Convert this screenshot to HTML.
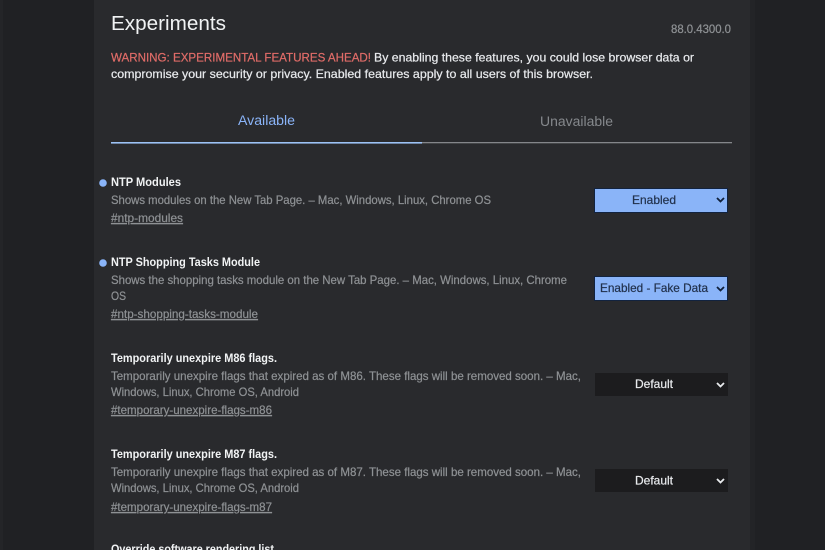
<!DOCTYPE html>
<html lang="en">
<head>
<meta charset="utf-8">
<title>Experiments</title>
<style>
html,body{margin:0;padding:0;width:825px;height:550px;overflow:hidden;background:#202124}
svg{display:block;position:absolute;left:0;top:0;filter:blur(.3px)}
text{font-family:"Liberation Sans",sans-serif;font-size:12px;stroke-width:.22px}
.t{font-weight:bold;font-size:11.5px;fill:#f1f3f4;stroke-width:0}
.d{fill:#8e9194;stroke:#8e9194}
.l{fill:#8e9194;stroke:#8e9194;text-decoration:underline}
.w{fill:#e8eaed;stroke:#e8eaed}
.r{fill:#e06c68;stroke:#e06c68}
.b{fill:#22324d;stroke:#22324d}
.f{fill:#e8eaed;stroke:#e8eaed}
</style>
</head>
<body>
<svg width="825" height="550" viewBox="0 0 825 550">
<rect width="825" height="550" fill="#202124"/>
<rect x="0" y="0" width="3" height="550" fill="#242528"/>
<rect x="750" y="0" width="5" height="550" fill="#232427"/>
<rect x="94" y="0" width="656" height="550" fill="#292a2d"/>

<text x="111" y="30" style="font-size:20px" fill="#f1f3f4" textLength="115" lengthAdjust="spacingAndGlyphs">Experiments</text>
<text x="671" y="33" style="font-size:11.5px" class="d" textLength="60" lengthAdjust="spacingAndGlyphs">88.0.4300.0</text>

<text x="111" y="61.5" class="r" textLength="260" lengthAdjust="spacingAndGlyphs">WARNING: EXPERIMENTAL FEATURES AHEAD!</text>
<text x="374" y="61.5" class="w" textLength="320" lengthAdjust="spacingAndGlyphs">By enabling these features, you could lose browser data or</text>
<text x="111" y="78" class="w" textLength="482" lengthAdjust="spacingAndGlyphs">compromise your security or privacy. Enabled features apply to all users of this browser.</text>

<text x="238" y="125" style="font-size:13.5px" fill="#8ab4f8" textLength="57" lengthAdjust="spacingAndGlyphs">Available</text>
<text x="540" y="126" style="font-size:13.5px" fill="#85888c" textLength="73" lengthAdjust="spacingAndGlyphs">Unavailable</text>
<rect x="422" y="142" width="310" height="1.3" fill="#84868a"/>
<rect x="111" y="142" width="311" height="1.6" fill="#9cc2f5"/>

<circle cx="103" cy="183" r="3.8" fill="#8ab4f8"/>
<text x="111" y="186" class="t" textLength="70" lengthAdjust="spacingAndGlyphs">NTP Modules</text>
<text x="111" y="204" class="d" textLength="380" lengthAdjust="spacingAndGlyphs">Shows modules on the New Tab Page. – Mac, Windows, Linux, Chrome OS</text>
<text x="111" y="222" class="l" textLength="72" lengthAdjust="spacingAndGlyphs">#ntp-modules</text>

<circle cx="103" cy="263" r="3.8" fill="#8ab4f8"/>
<text x="111" y="266" class="t" textLength="149" lengthAdjust="spacingAndGlyphs">NTP Shopping Tasks Module</text>
<text x="111" y="284" class="d" textLength="456" lengthAdjust="spacingAndGlyphs">Shows the shopping tasks module on the New Tab Page. – Mac, Windows, Linux, Chrome</text>
<text x="111" y="300" class="d" textLength="15" lengthAdjust="spacingAndGlyphs">OS</text>
<text x="111" y="318" class="l" textLength="147" lengthAdjust="spacingAndGlyphs">#ntp-shopping-tasks-module</text>

<text x="111" y="362" class="t" textLength="166" lengthAdjust="spacingAndGlyphs">Temporarily unexpire M86 flags.</text>
<text x="111" y="380" class="d" textLength="470" lengthAdjust="spacingAndGlyphs">Temporarily unexpire flags that expired as of M86. These flags will be removed soon. – Mac,</text>
<text x="111" y="396" class="d" textLength="188" lengthAdjust="spacingAndGlyphs">Windows, Linux, Chrome OS, Android</text>
<text x="111" y="414" class="l" textLength="161" lengthAdjust="spacingAndGlyphs">#temporary-unexpire-flags-m86</text>

<text x="111" y="458" class="t" textLength="166" lengthAdjust="spacingAndGlyphs">Temporarily unexpire M87 flags.</text>
<text x="111" y="476" class="d" textLength="470" lengthAdjust="spacingAndGlyphs">Temporarily unexpire flags that expired as of M87. These flags will be removed soon. – Mac,</text>
<text x="111" y="492" class="d" textLength="188" lengthAdjust="spacingAndGlyphs">Windows, Linux, Chrome OS, Android</text>
<text x="111" y="511" class="l" textLength="161" lengthAdjust="spacingAndGlyphs">#temporary-unexpire-flags-m87</text>

<text x="111" y="553" class="t" textLength="163" lengthAdjust="spacingAndGlyphs">Override software rendering list</text>

<rect x="594" y="188" width="134" height="25" fill="#12233f"/>
<rect x="595" y="189" width="132" height="23" fill="#8ab4f8"/>
<text x="654" y="204" text-anchor="middle" class="b" textLength="44" lengthAdjust="spacingAndGlyphs">Enabled</text>
<path d="M717 198l3.5 3.5 3.5-3.5" fill="none" stroke="#10203a" stroke-width="1.8"/>

<rect x="594" y="276" width="134" height="25" fill="#12233f"/>
<rect x="595" y="277" width="132" height="23" fill="#8ab4f8"/>
<text x="600" y="292" class="b" textLength="108" lengthAdjust="spacingAndGlyphs">Enabled - Fake Data</text>
<path d="M717 287l3.5 3.5 3.5-3.5" fill="none" stroke="#10203a" stroke-width="1.8"/>

<rect x="595" y="373" width="133" height="23" fill="#1c1c1e"/>
<text x="654" y="388" text-anchor="middle" class="f" textLength="38" lengthAdjust="spacingAndGlyphs">Default</text>
<path d="M717 383l3.5 3.5 3.5-3.5" fill="none" stroke="#e8eaed" stroke-width="1.8"/>

<rect x="595" y="469" width="133" height="23" fill="#1c1c1e"/>
<text x="654" y="484.500" text-anchor="middle" class="f" textLength="38" lengthAdjust="spacingAndGlyphs">Default</text>
<path d="M717 479l3.5 3.5 3.5-3.5" fill="none" stroke="#e8eaed" stroke-width="1.8"/>
</svg>
</body>
</html>
